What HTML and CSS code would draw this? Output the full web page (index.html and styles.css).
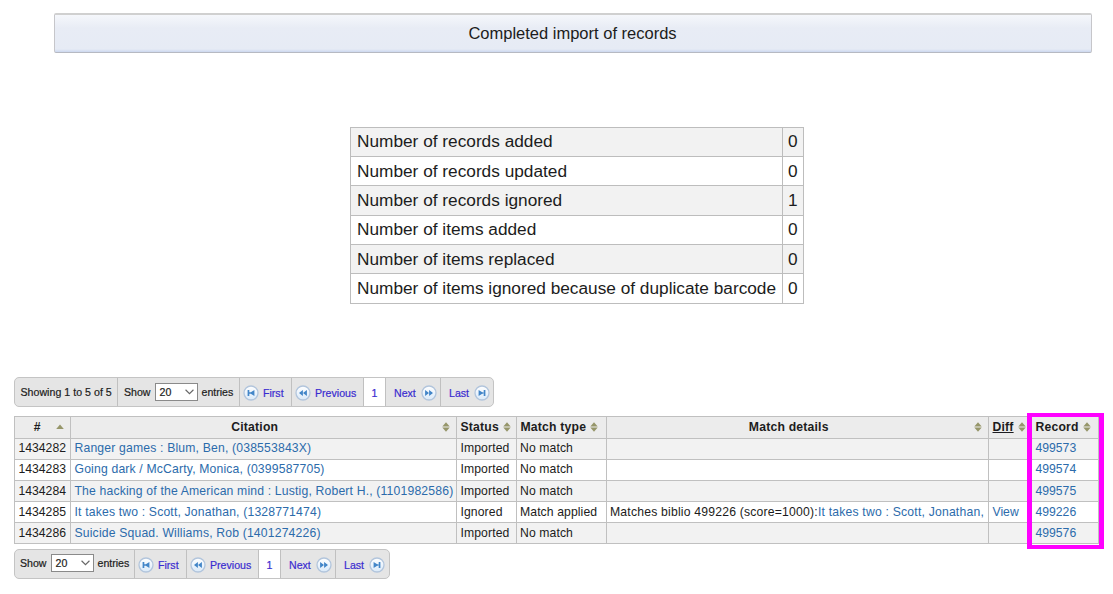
FILE: index.html
```html
<!DOCTYPE html>
<html lang="en">
<head>
<meta charset="utf-8">
<title>Completed import of records</title>
<link rel="stylesheet" href="styles.css">
</head>
<body>
<svg class="defs" width="0" height="0">
  <defs>
    <linearGradient id="disc" x1="0" y1="0" x2="0" y2="1"><stop offset="0" stop-color="#fff"/><stop offset="1" stop-color="#d9e9f9"/></linearGradient>
    <symbol id="first" viewBox="0 0 16 16"><circle cx="8" cy="8" r="7" fill="url(#disc)" stroke="#b2c5dc" stroke-width="1.3"/><path d="M4.6 5h1.7v6H4.600zM11.400 5v6L7.800 8.700H6V7.300h1.800z" fill="#4386c8"/></symbol>
    <symbol id="prev" viewBox="0 0 16 16"><circle cx="8" cy="8" r="7" fill="url(#disc)" stroke="#b2c5dc" stroke-width="1.3"/><path d="M7.900 5v6L4 8zM11.900 5v6L8 8z" fill="#4386c8"/></symbol>
    <symbol id="next" viewBox="0 0 16 16"><circle cx="8" cy="8" r="7" fill="url(#disc)" stroke="#b2c5dc" stroke-width="1.3"/><path d="M4.100 5v6L8 8zM8.100 5v6L12 8z" fill="#4386c8"/></symbol>
    <symbol id="last" viewBox="0 0 16 16"><circle cx="8" cy="8" r="7" fill="url(#disc)" stroke="#b2c5dc" stroke-width="1.3"/><path d="M4.600 5v6L8.200 8.700H10V7.300H8.200zM9.700 5h1.700v6H9.700z" fill="#4386c8"/></symbol>
    <symbol id="sort" viewBox="0 0 8 10"><path d="M4 .3 7.700 4.500H.3zM.3 5.500h7.400L4 9.700z" fill="#96966a"/></symbol>
    <symbol id="asc" viewBox="0 0 8 10"><path d="M4 2.500 7.800 7H.2z" fill="#96966a"/></symbol>
  </defs>
</svg>

<header class="message">Completed import of records</header>

<table class="summary">
  <tr><td>Number of records added</td><td>0</td></tr>
  <tr><td>Number of records updated</td><td>0</td></tr>
  <tr><td>Number of records ignored</td><td>1</td></tr>
  <tr><td>Number of items added</td><td>0</td></tr>
  <tr><td>Number of items replaced</td><td>0</td></tr>
  <tr><td>Number of items ignored because of duplicate barcode</td><td>0</td></tr>
</table>

<nav class="pager pager-top">
  <div class="cell info">Showing 1 to 5 of 5</div>
  <div class="cell length">Show <span class="select">20<svg class="chev" viewBox="0 0 8 5"><path d="M.5.5 4 4 7.500.5" /></svg></span> entries</div>
  <a class="cell first"><svg class="ico"><use href="#first"/></svg>First</a>
  <a class="cell prev"><svg class="ico"><use href="#prev"/></svg>Previous</a>
  <a class="cell current">1</a>
  <a class="cell next">Next<svg class="ico"><use href="#next"/></svg></a>
  <a class="cell last">Last<svg class="ico"><use href="#last"/></svg></a>
</nav>

<div class="results-wrap">
<table class="results">
  <colgroup><col class="c-id"><col class="c-cit"><col class="c-status"><col class="c-type"><col class="c-details"><col class="c-diff"><col class="c-record"></colgroup>
  <thead>
    <tr>
      <th><div class="head"><span>#</span><svg class="sort"><use href="#asc"/></svg></div></th>
      <th><div class="head wide"><span>Citation</span><svg class="sort"><use href="#sort"/></svg></div></th>
      <th><div class="head tight"><span>Status</span><svg class="sort"><use href="#sort"/></svg></div></th>
      <th><div class="head tight"><span>Match type</span><svg class="sort"><use href="#sort"/></svg></div></th>
      <th><div class="head wide"><span>Match details</span><svg class="sort"><use href="#sort"/></svg></div></th>
      <th><div class="head tight"><span class="abbr">Diff</span><svg class="sort"><use href="#sort"/></svg></div></th>
      <th><div class="head tight"><span>Record</span><svg class="sort"><use href="#sort"/></svg></div></th>
    </tr>
  </thead>
  <tbody>
    <tr><td>1434282</td><td><a>Ranger games : Blum, Ben, (038553843X)</a></td><td>Imported</td><td>No match</td><td></td><td></td><td><a>499573</a></td></tr>
    <tr><td>1434283</td><td><a>Going dark / McCarty, Monica, (0399587705)</a></td><td>Imported</td><td>No match</td><td></td><td></td><td><a>499574</a></td></tr>
    <tr><td>1434284</td><td><a>The hacking of the American mind : Lustig, Robert H., (1101982586)</a></td><td>Imported</td><td>No match</td><td></td><td></td><td><a>499575</a></td></tr>
    <tr><td>1434285</td><td><a>It takes two : Scott, Jonathan, (1328771474)</a></td><td>Ignored</td><td>Match applied</td><td>Matches biblio 499226 (score=1000):<a>It takes two : Scott, Jonathan,</a></td><td><a>View</a></td><td><a>499226</a></td></tr>
    <tr><td>1434286</td><td><a>Suicide Squad. Williams, Rob (1401274226)</a></td><td>Imported</td><td>No match</td><td></td><td></td><td><a>499576</a></td></tr>
  </tbody>
</table>
<div class="highlight"></div>
</div>

<nav class="pager pager-bottom">
  <div class="cell length">Show <span class="select">20<svg class="chev" viewBox="0 0 8 5"><path d="M.5.5 4 4 7.500.5" /></svg></span> entries</div>
  <a class="cell first"><svg class="ico"><use href="#first"/></svg>First</a>
  <a class="cell prev"><svg class="ico"><use href="#prev"/></svg>Previous</a>
  <a class="cell current">1</a>
  <a class="cell next">Next<svg class="ico"><use href="#next"/></svg></a>
  <a class="cell last">Last<svg class="ico"><use href="#last"/></svg></a>
</nav>
</body>
</html>
```

FILE: styles.css
```css
* { box-sizing: border-box; }
body {
  margin: 0;
  width: 1113px;
  height: 594px;
  overflow: hidden;
  display: flex;
  flex-direction: column;
  align-items: flex-start;
  background: #fff;
  color: #1c1c20;
  font-family: "Liberation Sans", Arial, sans-serif;
}
.defs { display: block; height: 0; flex: none; }

.message {
  width: 1038px;
  height: 40px;
  flex: none;
  margin: 13px 0 0 53.5px;
  border: 1px solid #c6c6ca;
  border-top: 2px solid #d0d0d0;
  border-bottom-color: #b6b9c2;
  border-radius: 2px;
  background: linear-gradient(#f5f7fb, #e8ecf5 35%, #e6ebf5 92%, #ccd8ef);
  font-size: 16.5px;
  line-height: 37px;
  text-align: center;
}

.summary {
  margin: 73.5px 0 0 350px;
  width: 454px;
  table-layout: fixed;
  border-collapse: collapse;
  font-size: 17.25px;
}
.summary td {
  height: 29.4px;
  padding: 0 0 1px 6px;
  border: 1px solid #bdbdbd;
  line-height: 20px;
  white-space: nowrap;
}
.summary td:first-child { width: 432px; }
.summary td:last-child { padding-left: 5px; }
.summary tr:nth-child(odd) td { background: #f2f2f2; }

.pager {
  display: flex;
  flex: none;
  height: 30px;
  margin-left: 14px;
  border: 1px solid #c4c4c4;
  border-radius: 5px;
  background: #e5e5e5;
  overflow: hidden;
  font-size: 10.6px;
  white-space: nowrap;
  -webkit-text-stroke: 0.2px currentColor;
}
.pager-top { margin-top: 73.5px; width: 480px; }
.pager-bottom { margin-top: 5px; width: 376px; }
.cell {
  display: flex;
  align-items: center;
  flex: none;
  border-right: 1px solid #c0c0c0;
}
.pager a { color: #3a2cd0; padding-top: 1px; }
.info { width: 103px; padding-left: 5.5px; letter-spacing: 0.03px; }
.length { width: 122px; padding: 0 0 1px 6px; gap: 4px; }
.pager-bottom .length { width: 120px; padding: 0 0 3px 5px; }
.first { width: 52px; padding-left: 3px; gap: 4px; }
.prev { width: 72px; padding-left: 3px; gap: 4px; }
.pager .current { width: 22px; justify-content: center; background: #fff; }
.next { width: 55px; padding-left: 8px; gap: 5px; }
.pager .last { flex: 1; padding-left: 8px; gap: 5px; border-right: 0; }
.ico { width: 16px; height: 16px; flex: none; }
.select {
  display: flex;
  align-items: center;
  justify-content: space-between;
  width: 43px;
  height: 18px;
  padding: 0 3px 0 4px;
  border: 1px solid #8a8a8a;
  background: #fff;
}
.chev { width: 9px; height: 6px; fill: none; stroke: #666; }

.results-wrap { position: relative; margin: 9px 0 0 14px; width: 1084px; }
.results {
  width: 1084px;
  table-layout: fixed;
  border-collapse: collapse;
  font-size: 12.2px;
}
.c-id { width: 56px; }
.c-cit { width: 386px; }
.c-status { width: 60px; }
.c-type { width: 90px; }
.c-details { width: 382px; }
.c-diff { width: 43px; }
.c-record { width: 67px; }
.results th, .results td {
  height: 21.2px;
  padding: 0 0 1px 3.5px;
  border: 1px solid #c0c0c0;
  line-height: 16px;
  text-align: left;
  white-space: nowrap;
}
.results td:nth-child(2) { letter-spacing: 0.17px; }
.results td:nth-child(3), .results td:nth-child(4) { letter-spacing: 0.1px; }
.results td:nth-child(4) { padding-left: 3px; }
.results td:nth-child(5) { padding-left: 3px; letter-spacing: 0.2px; }
.results th { background: #ececec; padding-bottom: 0; }
.results tbody tr:nth-child(odd) td { background: #f2f2f2; }
.results a { color: #2c6bab; }
.head { display: flex; align-items: center; padding-right: 6px; letter-spacing: 0.2px; }
.head span { flex: 1; text-align: center; }
.head.wide span { padding-right: 7px; }
.head.tight span { flex: none; }
.head.tight { gap: 4px; padding-right: 0; }
.head .abbr { text-decoration: underline; }
.sort { width: 8px; height: 10px; flex: none; }

/* Frame laid over the Record column */
.highlight {
  position: absolute;
  left: 1013px;
  top: -3px;
  width: 77px;
  height: 136px;
  border: 5px solid #ff00ff;
  border-top-width: 4px;
  border-bottom-width: 4px;
}
```
